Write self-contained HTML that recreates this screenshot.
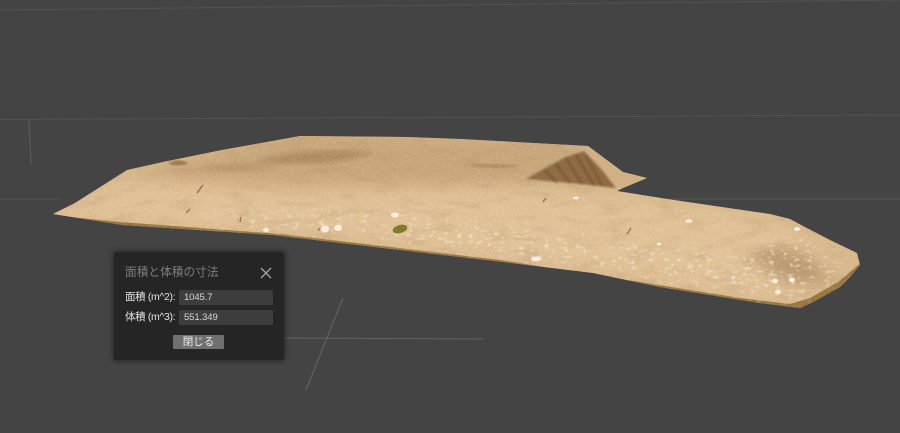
<!DOCTYPE html>
<html lang="ja"><head><meta charset="utf-8"><title>面積と体積の寸法</title>
<style>
html,body{margin:0;padding:0;width:900px;height:433px;overflow:hidden;background:#444}
svg{position:absolute;left:0;top:0}
#d{position:absolute;left:114px;top:252px;width:170px;height:108px;background:#252525;box-shadow:0 0 6px 1px rgba(0,0,0,.45);border-radius:2px;font-family:"Liberation Sans","Noto Sans CJK JP",sans-serif}
#d div{position:absolute;white-space:nowrap}
.t{left:11px;top:13px;font-size:11.7px;color:#7d7d7d;line-height:16px}
.l{left:11px;font-size:10.5px;letter-spacing:-.35px;color:#e2e2e2;line-height:14px}
.i{left:65px;width:94px;height:15px;background:#3d3d3d;border-radius:1px;color:#d8d8d8;font-size:9.5px;letter-spacing:-.1px;line-height:15px;text-indent:5px}
.b{left:59px;top:83px;width:51px;height:14px;background:#707070;border-radius:1px;color:#eee;font-size:10.5px;line-height:14px;text-align:center}
</style></head><body>
<svg width="900" height="433" viewBox="0 0 900 433" xmlns="http://www.w3.org/2000/svg">
<defs>
<filter id="n" x="0" y="0" width="100%" height="100%"><feTurbulence type="fractalNoise" baseFrequency=".6 .9" numOctaves="2" seed="4"/><feColorMatrix values="0 0 0 0 1  0 0 0 0 .93  0 0 0 0 .8  4 0 0 0 -2.2"/><feGaussianBlur stdDeviation=".4"/></filter>
<filter id="k" x="0" y="0" width="100%" height="100%"><feTurbulence type="fractalNoise" baseFrequency=".6 .9" numOctaves="2" seed="17"/><feColorMatrix values="0 0 0 0 .48  0 0 0 0 .34  0 0 0 0 .18  4 0 0 0 -2.1"/><feGaussianBlur stdDeviation=".4"/></filter>
<filter id="s" x="0" y="0" width="100%" height="100%"><feTurbulence type="fractalNoise" baseFrequency=".16 .34" numOctaves="2" seed="23"/><feColorMatrix values="0 0 0 0 .97  0 0 0 0 .92  0 0 0 0 .83  8 0 0 0 -4.9"/><feGaussianBlur stdDeviation=".4"/></filter>
<filter id="m" x="0" y="0" width="100%" height="100%"><feTurbulence type="fractalNoise" baseFrequency=".035 .12" numOctaves="3" seed="9"/><feColorMatrix values="0 0 0 0 .45  0 0 0 0 .3  0 0 0 0 .15  3 0 0 0 -1.5"/></filter>
<filter id="b1"><feGaussianBlur stdDeviation="1"/></filter>
<filter id="b3"><feGaussianBlur stdDeviation="3"/></filter>
<filter id="b8"><feGaussianBlur stdDeviation="8"/></filter>
<filter id="t"><feGaussianBlur stdDeviation=".3"/></filter>
<mask id="sm"><path d="M190 226L330 232 460 250 600 270 720 290 800 302 850 270 800 235 740 255 600 240 460 222 330 212 190 214Z" fill="#fff" filter="url(#b8)"/></mask>
<clipPath id="c"><path d="M53 214L75 203 127 170 163 162 222 150 267 142 300 136 407 137 460 139 588 146 623 172 647 178 623 188 617 191 667 199 770 214 790 219 803 226 830 240 857 253 860 265 850 277 840 287 813 302 800 308 760 303 660 287 593 273 503 262 460 257 273 235 123 225Z"/></clipPath>
</defs>
<g fill="none" stroke="#525252" stroke-width="1">
<path d="M0 10L900 0"/><path d="M0 119.500L900 115"/><path d="M0 199H60"/><path d="M640 199H900" stroke="#5a5a5a"/>
<path d="M29 120L31 165" stroke="#5c5c5c"/><path d="M343 298L306 390" stroke="#666"/><path d="M283 338L483 339" stroke="#636363"/>
</g>
<path d="M53 214L75 203 127 170 163 162 222 150 267 142 300 136 407 137 460 139 588 146 623 172 647 178 623 188 617 191 667 199 770 214 790 219 803 226 830 240 857 253 860 265 850 277 840 287 813 302 800 308 760 303 660 287 593 273 503 262 460 257 273 235 123 225Z" fill="#d9b88c"/>
<g clip-path="url(#c)">
<path d="M120 176L300 130 600 140 560 180 500 186 300 184 150 184Z" fill="#c8a679" filter="url(#b8)"/>
<path d="M40 220L130 178 300 195 500 190 640 200 770 220 820 250 840 280 780 300 600 270 300 232 100 222Z" fill="#e3c398" filter="url(#b8)"/>
<path d="M745 255Q785 238 815 260L835 285 790 285Z" fill="#a5815a" opacity=".65" filter="url(#b8)"/>
<path d="M258 160Q320 145 375 153 330 168 258 162Z" fill="#96724a" opacity=".55" filter="url(#b3)"/>
<path d="M205 168Q240 160 280 167 240 174 205 170Z" fill="#a07c50" opacity=".4" filter="url(#b3)"/>
<path d="M168 163q10-5 20 0q-10 5-20 0Z" fill="#7d5a30" opacity=".7" filter="url(#b1)"/>
<path d="M465 165q25-3 55 1q-25 5-55-1Z" fill="#9a7548" opacity=".5" filter="url(#b1)"/>
<path d="M120 222L280 234 500 260 640 282 740 298 790 304 810 298 838 282 862 262 868 320 40 320 40 214Z" fill="#94713a"/>
<rect x="40" y="130" width="830" height="185" filter="url(#m)" opacity=".25"/>
<rect x="40" y="130" width="830" height="185" filter="url(#k)" opacity=".35"/>
<rect x="40" y="130" width="830" height="185" filter="url(#n)" opacity=".4"/>
<rect x="40" y="130" width="830" height="185" filter="url(#s)" mask="url(#sm)" opacity=".6"/>
<path d="M588 146L623 172 647 178 623 188 612 186 585 150Z" fill="#d2b085" filter="url(#b1)"/>
<path d="M526 179Q545 168 566 157L584 151 602 170 616 188 570 183Z" fill="#8f6c44" filter="url(#b1)"/>
<path d="M545 170l12 13M556 164l14 19M566 158l16 26M576 155l18 30M586 156l16 29" stroke="#6e4e2b" stroke-width="2" opacity=".65" fill="none" filter="url(#b1)"/>
<g fill="#f8eee0">
<ellipse cx="395" cy="215" rx="4" ry="2.500"/><ellipse cx="325" cy="229" rx="4" ry="3.500"/><ellipse cx="338" cy="228" rx="4" ry="3"/><ellipse cx="266" cy="230" rx="3" ry="2"/><ellipse cx="536" cy="259" rx="5" ry="2.500"/><ellipse cx="689" cy="221" rx="3.500" ry="1.800"/><ellipse cx="659" cy="244" rx="2.500" ry="1.500"/><ellipse cx="576" cy="198" rx="3" ry="1.500"/><ellipse cx="797" cy="229" rx="3" ry="2"/><ellipse cx="778" cy="292" rx="3" ry="2"/><ellipse cx="775" cy="281" rx="3" ry="2.500"/><ellipse cx="792" cy="280" rx="3" ry="2.500"/></g>
<ellipse cx="400" cy="229" rx="7.500" ry="4" fill="#7e7d2e" transform="rotate(-15 400 229)"/>
<path d="M240 222l1-5M543 202l3-4M627 234l4-6M186 213l4-4M197 193l6-8M320 228l-2 3" stroke="#6b4c28" stroke-width="1.500" opacity=".6" fill="none"/>
</g>
</svg>
<div id="d">
<div class="t">面積と体積の寸法</div>
<svg style="left:146px;top:15px" width="12" height="12" viewBox="0 0 12 12"><path d="M1 1L11 11M11 1L1 11" stroke="#a5a5a5" stroke-width="1.300" fill="none"/></svg>
<div class="l" style="top:38px">面積 (m^2):</div><div class="i" style="top:38px">1045.7</div>
<div class="l" style="top:58px">体積 (m^3):</div><div class="i" style="top:58px">551.349</div>
<div class="b">閉じる</div>
</div>
</body></html>
